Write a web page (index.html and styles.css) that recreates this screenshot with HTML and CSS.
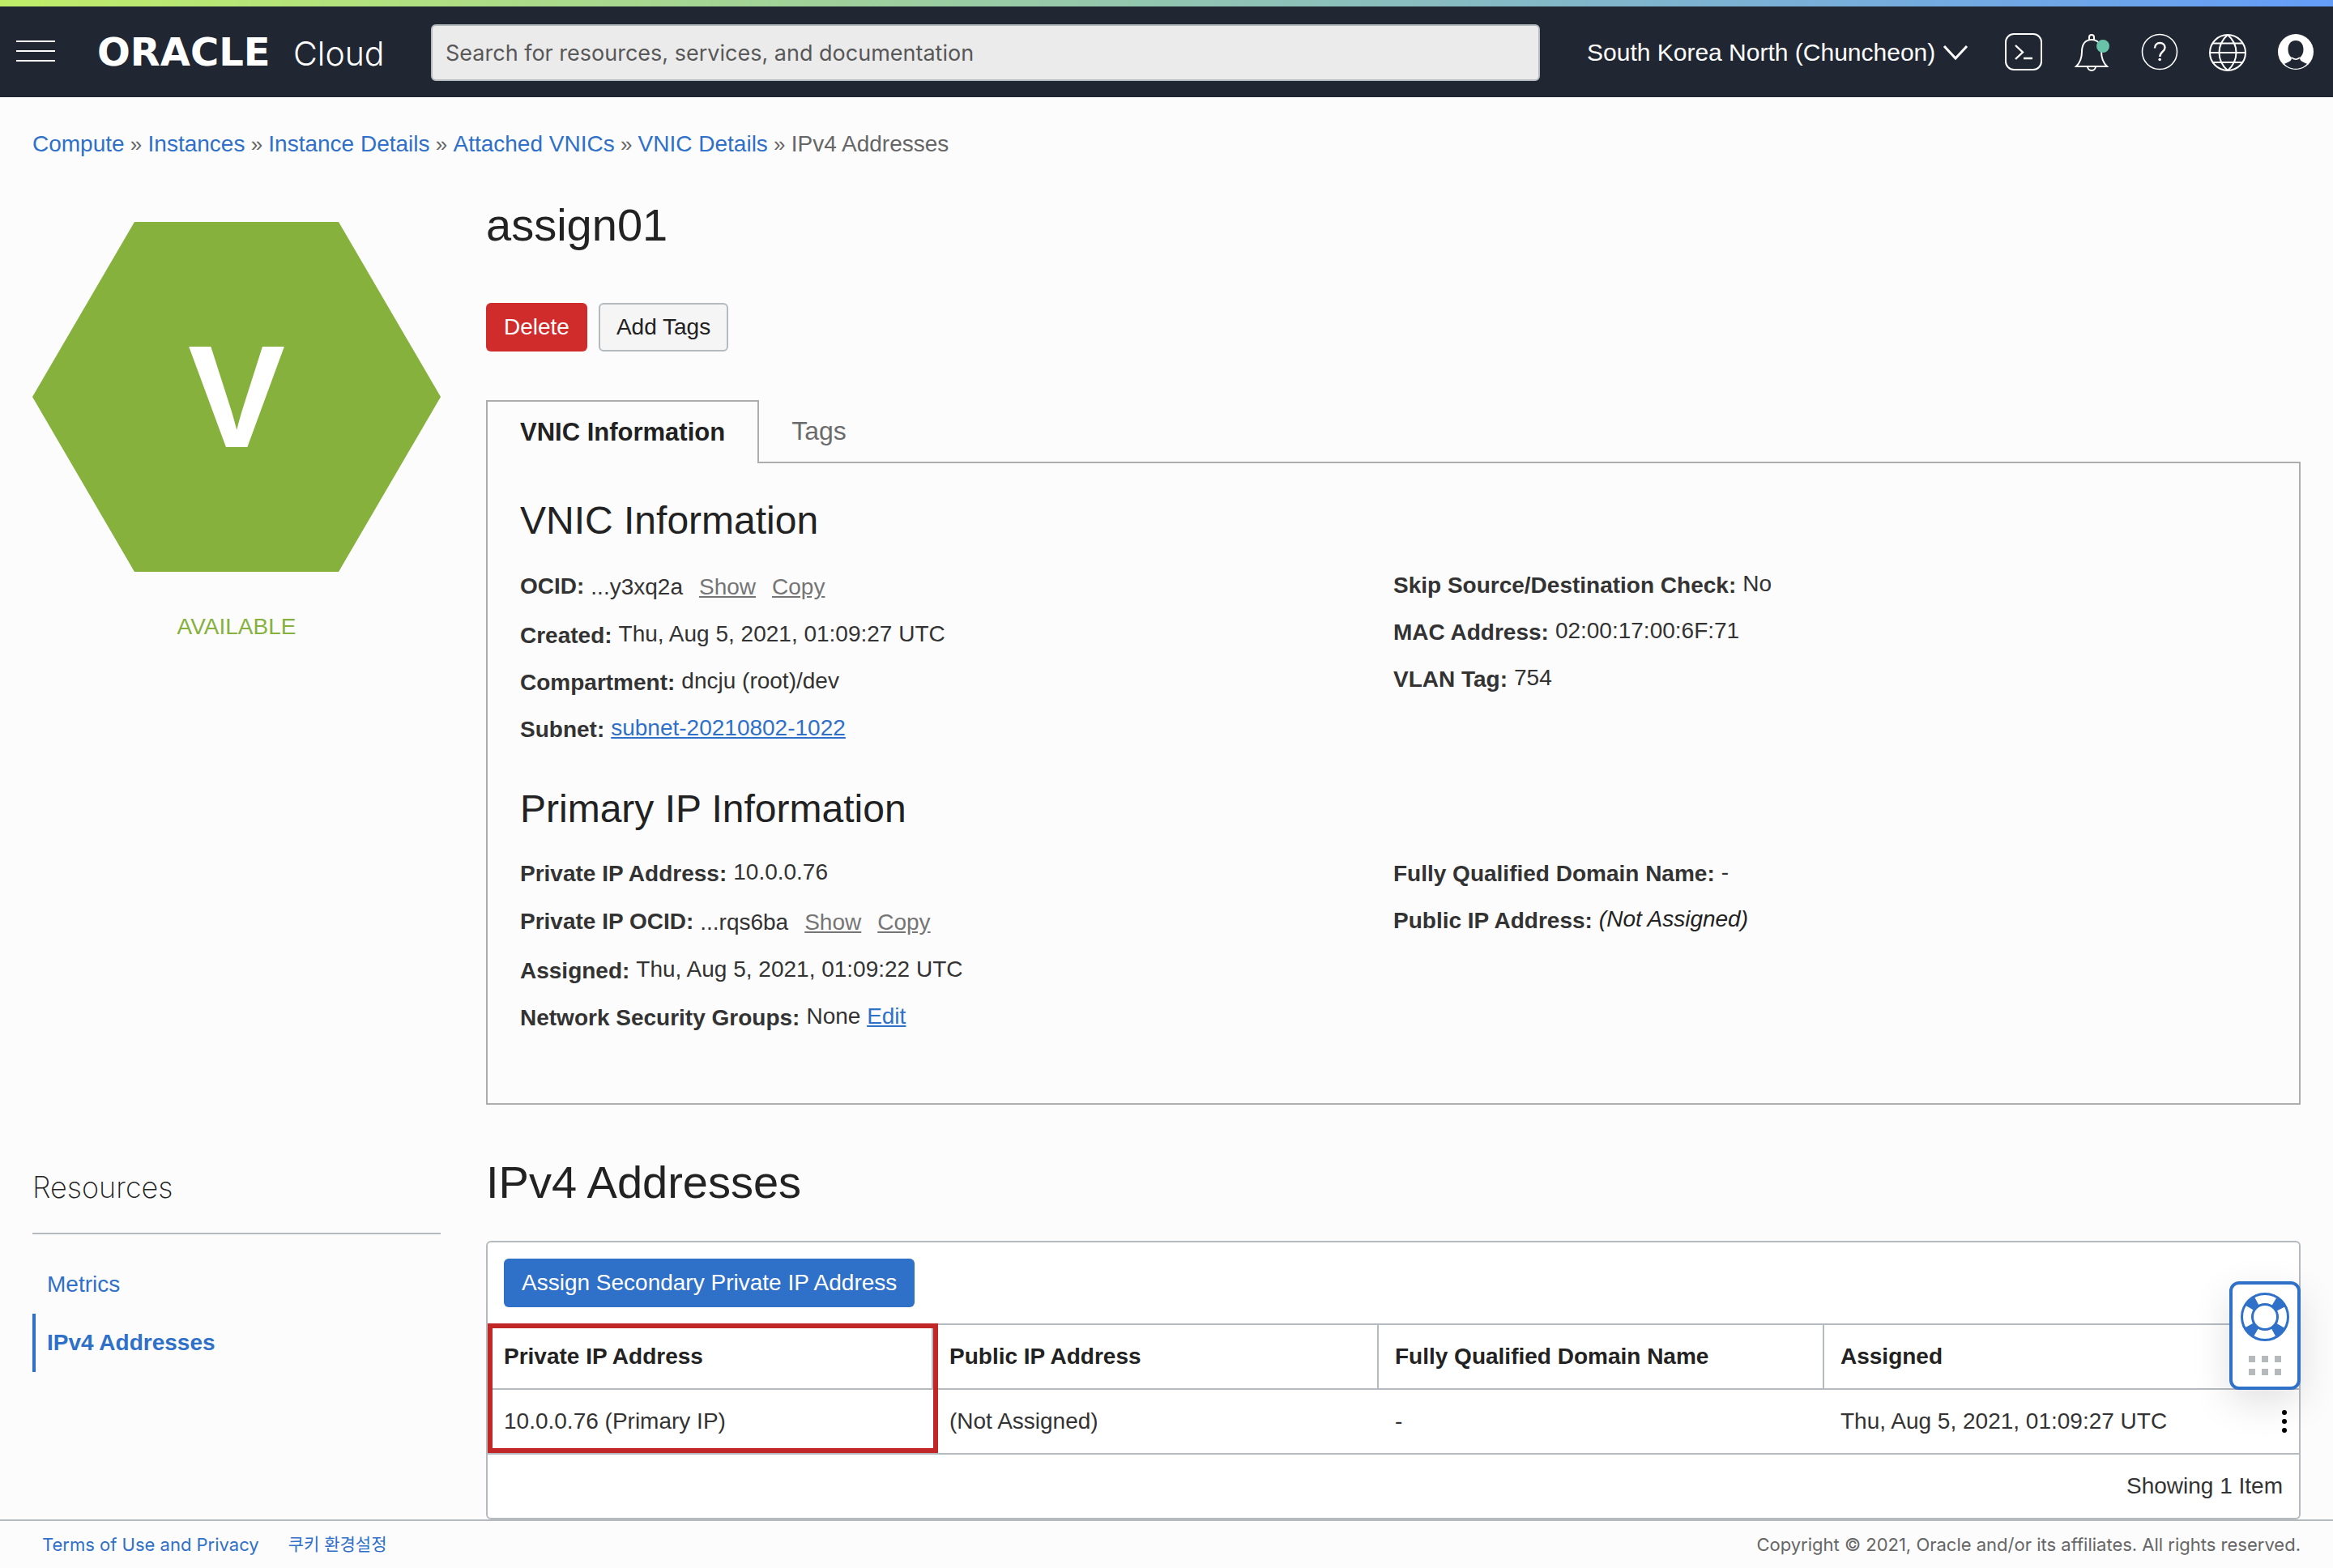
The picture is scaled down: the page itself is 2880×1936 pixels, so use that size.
FILE: index.html
```html
<!DOCTYPE html>
<html lang="en">
<head>
<meta charset="utf-8">
<title>assign01 - Oracle Cloud Infrastructure</title>
<link rel="stylesheet" href="styles.css">
</head>
<body>
<header class="topbar">
  <button class="icon-btn menu-btn" type="button" aria-label="Open navigation menu">
    <svg viewBox="0 0 48 48" width="48" height="48"><path d="M0 10h48M0 22h48M0 34h48" stroke="#fff" stroke-width="2"/></svg>
  </button>
  <a class="brand" href="#"><span class="brand-oracle">ORACLE</span><span class="brand-cloud">Cloud</span></a>
  <input class="search" type="search" aria-label="Search" placeholder="Search for resources, services, and documentation">
  <div class="region">
    <select class="region-select" aria-label="Region"><option>South Korea North (Chuncheon)</option></select>
    <svg class="region-chevron" viewBox="0 0 32 24" width="32" height="24"><path d="M2 4l14 15L30 4" fill="none" stroke="#fff" stroke-width="3"/></svg>
  </div>
  <div class="tools">
    <button class="icon-btn" type="button" aria-label="Cloud Shell">
      <svg viewBox="0 0 48 48" width="48" height="48" fill="none" stroke="#fff" stroke-width="2"><rect x="2" y="1" width="44" height="44" rx="10"/><path d="M14 15l9 8.500-9 8.500M24 31h11" stroke-width="2.400"/></svg>
    </button>
    <button class="icon-btn" type="button" aria-label="Announcements">
      <svg viewBox="0 0 48 48" width="48" height="48" fill="none" stroke="#fff" stroke-width="2"><path d="M5 41c5-5 7-11 7-18 0-9 4-15 12-15s12 6 12 15c0 7 2 13 7 18z"/><path d="M21 8V5a3 3 0 0 1 6 0v3M19 41a5 5 0 0 0 10 0"/><circle cx="38" cy="16" r="8" fill="#68c3a9" stroke="none"/></svg>
    </button>
    <button class="icon-btn" type="button" aria-label="Help">
      <svg viewBox="0 0 48 48" width="48" height="48" fill="none" stroke="#fff" stroke-width="2"><circle cx="24" cy="23" r="21.500" stroke-width="1.600"/><path d="M18 18.500c0-4 2.600-6.500 6.300-6.500 3.700 0 6.200 2.400 6.200 5.700 0 5.300-6.200 5.300-6.200 11.300" stroke-width="2.400"/><circle cx="24.200" cy="32.500" r="1.800" fill="#fff" stroke="none"/></svg>
    </button>
    <button class="icon-btn" type="button" aria-label="Language">
      <svg viewBox="0 0 48 48" width="48" height="48" fill="none" stroke="#fff" stroke-width="2"><circle cx="24" cy="24" r="22"/><path d="M24 2c-14 12-14 32 0 44M24 2c14 12 14 32 0 44M2 24h44M6 12.500h36M6 36h36"/></svg>
    </button>
    <button class="icon-btn" type="button" aria-label="Profile">
      <svg viewBox="0 0 48 48" width="48" height="48"><circle cx="24" cy="23" r="22" fill="#fff"/><path d="M24 9c-6 0-9.500 4.500-9.500 11 0 4.500 1.700 8 4.500 10.200 0 4.800-5 5.600-9 7.600C13.500 41.500 18 43.800 24 43.800s10.500-2.300 14-6c-4-2-9-2.800-9-7.600 2.800-2.200 4.500-5.700 4.500-10.200 0-6.500-3.500-11-9.500-11z" fill="#202733"/><path d="M19 30.200c3 2.400 7 2.400 10 0" fill="none" stroke="#fff" stroke-width="1.500"/></svg>
    </button>
  </div>
</header>

<main class="page">
  <nav class="breadcrumbs" aria-label="Breadcrumb">
    <a href="#">Compute</a> » <a href="#">Instances</a> » <a href="#">Instance Details</a> » <a href="#">Attached VNICs</a> » <a href="#">VNIC Details</a> » <span>IPv4 Addresses</span>
  </nav>

  <div class="columns">
    <aside class="status">
      <div class="hexagon">V</div>
      <p class="status-text">AVAILABLE</p>
    </aside>

    <section class="details">
      <h1 class="title">assign01</h1>
      <div class="actions">
        <button class="btn btn-danger" type="button">Delete</button>
        <button class="btn btn-default" type="button">Add Tags</button>
      </div>
      <div class="tabs" role="tablist">
        <button class="tab tab-active" type="button" role="tab" aria-selected="true">VNIC Information</button>
        <button class="tab" type="button" role="tab" aria-selected="false">Tags</button>
      </div>
      <div class="panel" role="tabpanel">
        <h2 class="panel-title">VNIC Information</h2>
        <div class="facts">
          <dl class="fact-list">
            <div class="fact fact-ocid"><dt>OCID:</dt><dd>...y3xq2a</dd><dd><a class="quiet" href="#">Show</a></dd><dd><a class="quiet" href="#">Copy</a></dd></div>
            <div class="fact"><dt>Created:</dt><dd>Thu, Aug 5, 2021, 01:09:27 UTC</dd></div>
            <div class="fact"><dt>Compartment:</dt><dd>dncju (root)/dev</dd></div>
            <div class="fact"><dt>Subnet:</dt><dd><a class="underlined" href="#">subnet-20210802-1022</a></dd></div>
          </dl>
          <dl class="fact-list">
            <div class="fact"><dt>Skip Source/Destination Check:</dt><dd>No</dd></div>
            <div class="fact"><dt>MAC Address:</dt><dd>02:00:17:00:6F:71</dd></div>
            <div class="fact"><dt>VLAN Tag:</dt><dd>754</dd></div>
          </dl>
        </div>
        <h2 class="panel-title">Primary IP Information</h2>
        <div class="facts">
          <dl class="fact-list">
            <div class="fact"><dt>Private IP Address:</dt><dd>10.0.0.76</dd></div>
            <div class="fact fact-ocid"><dt>Private IP OCID:</dt><dd>...rqs6ba</dd><dd><a class="quiet" href="#">Show</a></dd><dd><a class="quiet" href="#">Copy</a></dd></div>
            <div class="fact"><dt>Assigned:</dt><dd>Thu, Aug 5, 2021, 01:09:22 UTC</dd></div>
            <div class="fact"><dt>Network Security Groups:</dt><dd>None <a class="underlined" href="#">Edit</a></dd></div>
          </dl>
          <dl class="fact-list">
            <div class="fact"><dt>Fully Qualified Domain Name:</dt><dd>-</dd></div>
            <div class="fact"><dt>Public IP Address:</dt><dd><em>(Not Assigned)</em></dd></div>
          </dl>
        </div>
      </div>
    </section>

    <aside class="resources">
      <h2 class="resources-title">Resources</h2>
      <ul class="resource-list">
        <li><a class="resource" href="#">Metrics</a></li>
        <li><a class="resource resource-active" href="#" aria-current="page">IPv4 Addresses</a></li>
      </ul>
    </aside>

    <section class="addresses">
      <h2 class="title">IPv4 Addresses</h2>
      <div class="table-card">
        <div class="table-actions"><button class="btn btn-primary" type="button">Assign Secondary Private IP Address</button></div>
        <div class="table-wrap">
          <table class="table">
            <colgroup><col><col><col><col><col class="col-menu"></colgroup>
            <thead><tr><th scope="col">Private IP Address</th><th scope="col">Public IP Address</th><th scope="col">Fully Qualified Domain Name</th><th scope="col" colspan="2">Assigned</th></tr></thead>
            <tbody><tr><td>10.0.0.76 (Primary IP)</td><td>(Not Assigned)</td><td>-</td><td>Thu, Aug 5, 2021, 01:09:27 UTC</td><td class="menu-cell"><button class="kebab" type="button" aria-label="Row actions"><svg viewBox="0 0 8 30" width="8" height="30"><circle cx="4" cy="4" r="3"/><circle cx="4" cy="15" r="3"/><circle cx="4" cy="26" r="3"/></svg></button></td></tr></tbody>
          </table>
          <div class="highlight"></div>
        </div>
        <p class="table-count">Showing 1 Item</p>
      </div>
    </section>
  </div>
</main>

<footer class="footer">
  <div class="footer-links"><a href="#">Terms of Use and Privacy</a><a href="#" lang="ko">쿠키 환경설정</a></div>
  <p class="copyright">Copyright © 2021, Oracle and/or its affiliates. All rights reserved.</p>
</footer>

<button class="support" type="button" aria-label="Support">
  <svg viewBox="0 0 60 60" width="60" height="60" fill="none" stroke="#2f70c8"><circle cx="30" cy="30" r="22" stroke-width="13" stroke-dasharray="12 22.560" stroke-dashoffset="-11.280"/><circle cx="30" cy="30" r="28.500" stroke-width="3"/><circle cx="30" cy="30" r="15.500" stroke-width="3"/></svg>
  <svg viewBox="0 0 40 24" width="40" height="24" fill="#b5babf"><path d="M0 0h8v8H0zM16 0h8v8h-8zM32 0h8v8h-8zM0 16h8v8H0zM16 16h8v8h-8zM32 16h8v8h-8z"/></svg>
</button>
</body>
</html>
```
FILE: styles.css
```css
:root {
  --blue: #2f70c8;
  --line: #b5babf;
  --panel-line: #adadad;
  --ink: #222;
  --text: #333;
  --navy: #202733;
  --green: #85b13c;
  --page: #fcfcfc;
  --menu-col: 36px;
  --sans: "Liberation Sans", Arial, sans-serif;
  --ui: Inter, "Noto Sans CJK KR", sans-serif;
}

* { box-sizing: border-box; }

body {
  margin: 0;
  min-height: 100vh;
  display: flex;
  flex-direction: column;
  background: var(--page);
  color: var(--text);
  font: 28px/36px var(--sans);
}

h1, h2, p, dl, dd, ul { margin: 0; padding: 0; }
ul { list-style: none; }
a { color: var(--blue); text-decoration: none; }
button, input, select { font: inherit; color: inherit; }
button { cursor: pointer; }
svg { display: block; }

/* Top bar */
.topbar {
  display: flex;
  align-items: center;
  height: 120px;
  padding: 10px 22px 0 20px;
  background: linear-gradient(90deg, #c0ed68, #649df8) top / 100% 8px no-repeat var(--navy);
  color: #fff;
}
.icon-btn { padding: 0; border: 0; background: none; }
.brand {
  display: flex;
  align-items: baseline;
  width: 412px;
  margin-left: 52px;
  color: #fff;
  white-space: nowrap;
}
.brand-oracle { width: 242px; font: bold 48px/56px "DejaVu Sans", sans-serif; }
.brand-cloud { font: 300 41px/56px Inter, sans-serif; }
.search {
  flex: 1;
  height: 70px;
  margin: 0 58px 0 0;
  padding: 0 16px;
  border: 2px solid var(--line);
  border-radius: 6px;
  background: #ebebeb;
  font: 27px/36px var(--ui);
  appearance: none;
}
.search::placeholder { color: #585858; opacity: 1; }
.region { display: flex; align-items: center; gap: 8px; }
.region-select {
  padding: 0;
  border: 0;
  background: none;
  font-size: 30px;
  appearance: none;
}
.tools { display: flex; gap: 36px; margin-left: 44px; }

/* Page */
.page { padding: 0 40px; }
.breadcrumbs { padding: 40px 0; color: #666; font-size: 26px; }
.breadcrumbs a, .breadcrumbs span { font-size: 28px; }
.columns {
  display: grid;
  grid-template-columns: 504px 1fr;
  column-gap: 56px;
}
.status { padding-top: 38px; text-align: center; }
.hexagon {
  display: flex;
  align-items: center;
  justify-content: center;
  height: 432px;
  background: var(--green);
  clip-path: polygon(25% 0, 75% 0, 100% 50%, 75% 100%, 25% 100%, 0 50%);
  color: #fff;
  font-size: 180px;
  font-weight: bold;
}
.status-text { margin-top: 50px; color: var(--green); }

.title {
  color: var(--ink);
  font-size: 56px;
  font-weight: normal;
  line-height: 64px;
}
.details .title { padding-top: 10px; }
.actions { display: flex; gap: 14px; margin-top: 64px; }
.btn {
  height: 60px;
  padding: 0 20px;
  border: 2px solid transparent;
  border-radius: 6px;
}
.btn-danger { background: #d12c2c; color: #fff; }
.btn-default { border-color: var(--line); background: #f5f5f5; color: var(--ink); }
.btn-primary { background: var(--blue); color: #fff; }

.tabs { display: flex; margin-top: 60px; }
.tab {
  height: 76px;
  padding: 0 40px;
  border: 0;
  background: none;
  color: #6b6b6b;
  font-size: 32px;
}
.tab-active {
  z-index: 1;
  height: 78px;
  margin-bottom: -2px;
  border: 2px solid var(--panel-line);
  border-bottom: 0;
  background: var(--page);
  color: var(--ink);
  font-size: 31px;
  font-weight: bold;
}
.panel {
  padding: 42px 40px 76px;
  border: 2px solid var(--panel-line);
}
.panel-title {
  color: var(--ink);
  font-size: 48px;
  font-weight: normal;
  line-height: 58px;
}
.facts {
  display: grid;
  grid-template-columns: 1fr 1fr;
  padding: 22px 0 40px;
}
.panel .facts:last-child { padding-bottom: 0; }
.fact { display: flex; align-items: center; gap: 8px; height: 58px; }
.fact dt { font-weight: bold; }
.fact dd { padding-bottom: 4px; }
.fact em { color: var(--ink); }
.fact-ocid { height: 60px; margin-bottom: 2px; }
.fact-ocid dd { padding: 2px 12px 0 0; }
.quiet { color: #757575; text-decoration: underline; }
.underlined { text-decoration: underline; }

/* Resources and address table */
.resources { padding-top: 78px; }
.resources-title {
  padding-bottom: 32px;
  border-bottom: 2px solid var(--line);
  color: var(--ink);
  font: 200 36px/48px Inter, sans-serif;
}
.resource-list { padding-top: 26px; }
.resource {
  display: flex;
  align-items: center;
  height: 72px;
  padding-left: 14px;
  border-left: 4px solid transparent;
}
.resource-active { border-color: var(--blue); font-weight: bold; }

.addresses { padding-top: 64px; }
.table-card {
  margin-top: 40px;
  border: 2px solid var(--line);
  border-radius: 6px;
  background: #fff;
}
.table-actions { padding: 20px; }
.table-wrap { position: relative; }
.table {
  width: 100%;
  border-collapse: separate;
  border-spacing: 0;
  table-layout: fixed;
}
.col-menu { width: var(--menu-col); }
.table th, .table td { height: 80px; padding: 0 20px; text-align: left; }
.table th {
  border-top: 2px solid var(--line);
  border-right: 2px solid var(--line);
  color: var(--ink);
}
.table th:last-child { border-right: 0; }
.table td { height: 82px; border-top: 2px solid var(--line); border-bottom: 2px solid var(--line); }
.table .menu-cell { padding: 0 14px; }
.kebab { display: block; width: 8px; padding: 0; border: 0; background: none; }
.highlight {
  position: absolute;
  inset: 0 auto 2px 0;
  width: calc((100% - var(--menu-col)) / 4 + 6px);
  border: 6px solid #c12727;
}
.table-count { padding: 21px 20px; text-align: right; }

/* Footer */
.footer {
  display: flex;
  align-items: center;
  justify-content: space-between;
  height: 60px;
  margin-top: auto;
  padding: 0 40px 0 52px;
  border-top: 2px solid var(--line);
  font: 22px/32px var(--ui);
}
.footer-links { display: flex; gap: 36px; }
.footer-links :lang(ko) { font-size: 21px; }
.copyright { color: #666; }

/* Floating support handle */
.support {
  position: fixed;
  right: 40px;
  bottom: 220px;
  display: flex;
  flex-direction: column;
  align-items: center;
  gap: 18px;
  width: 88px;
  height: 134px;
  padding: 10px 0;
  border: 4px solid var(--blue);
  border-radius: 12px;
  background: #fff;
  box-shadow: 0 16px 48px rgba(0, 0, 0, 0.12);
}
```
